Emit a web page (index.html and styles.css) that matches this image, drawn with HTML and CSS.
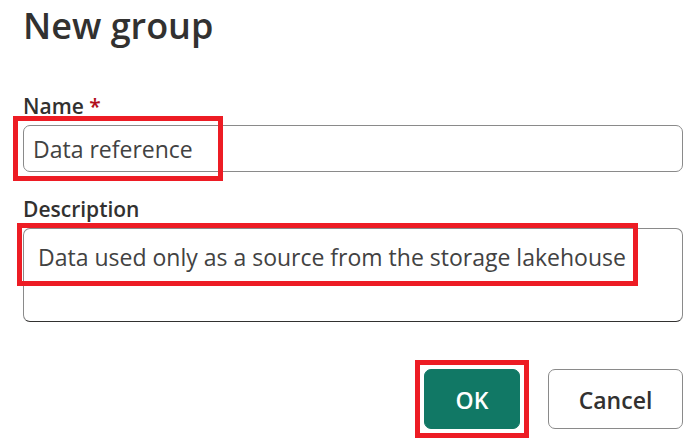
FILE: index.html
```html
<!DOCTYPE html>
<html lang="en">
<head>
<meta charset="utf-8">
<title>New group</title>
<link rel="stylesheet" href="styles.css">
</head>
<body>
<form class="dialog">
  <h1 class="title">New group</h1>
  <div class="field">
    <label class="label" for="name">Name <span class="required">*</span></label>
    <div class="control">
      <input class="box name" id="name" type="text" value="Data reference" required>
      <span class="highlight highlight-name"></span>
    </div>
  </div>
  <div class="field">
    <label class="label" for="description">Description</label>
    <div class="control">
      <textarea class="box description" id="description">Data used only as a source from the storage lakehouse</textarea>
      <span class="highlight highlight-description"></span>
    </div>
  </div>
  <div class="actions">
    <div class="control">
      <button class="button primary" type="button">OK</button>
      <span class="highlight highlight-ok"></span>
    </div>
    <button class="button cancel" type="button">Cancel</button>
  </div>
</form>
</body>
</html>
```
FILE: styles.css
```css
* { box-sizing: border-box; }
body {
  margin: 0;
  background: #fff;
  color: #323130;
  font-family: "Segoe UI", "Open Sans", "Noto Sans", sans-serif;
}
.dialog { padding: 4px 17px 10px 23px; }
.title {
  margin: 0;
  font-size: 36px;
  line-height: 44px;
  font-weight: 600;
}
.field { margin-top: 24px; }
.title + .field { margin-top: 45px; }
.label {
  display: block;
  padding-bottom: 6px;
  font-size: 21px;
  line-height: 26px;
  font-weight: 600;
}
.required { color: #b10e1c; }
.control { position: relative; display: flex; }
.box {
  display: block;
  width: 100%;
  margin: 0;
  border: 1px solid #8a8a8a;
  border-radius: 7px;
  background: #fff;
  color: #424242;
  font: 23px/32px "Segoe UI", "Open Sans", "Noto Sans", sans-serif;
  outline: none;
}
.name { height: 47px; padding: 0 9px; }
.description {
  height: 94px;
  padding: 12px 14px;
  border-bottom-color: #323130;
  resize: none;
  overflow: hidden;
}
.highlight {
  position: absolute;
  border: 5px solid #ed1c24;
  pointer-events: none;
}
.highlight-name { left: -10px; top: -9px; width: 210px; height: 65px; }
.highlight-description { left: -6px; top: -5px; width: 621px; height: 63px; }
.highlight-ok { inset: -9px; }
.actions {
  display: flex;
  justify-content: flex-end;
  gap: 28px;
  margin-top: 47px;
}
.button {
  height: 60px;
  padding: 2px 6px 0;
  border: 1px solid #8a8a8a;
  border-radius: 7px;
  background: #fff;
  color: #323130;
  font: 600 23px/32px "Segoe UI", "Open Sans", "Noto Sans", sans-serif;
}
.primary { width: 96px; border-color: #117865; background: #117865; color: #fff; }
.cancel { width: 135px; }
```
